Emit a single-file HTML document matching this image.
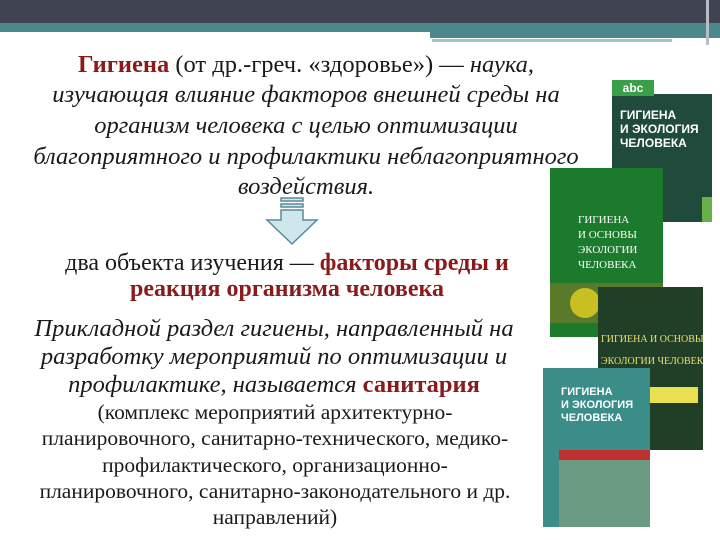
<!DOCTYPE html>
<html><head><meta charset="utf-8"><style>
body{margin:0;width:720px;height:540px;background:#fff;position:relative;overflow:hidden;font-family:"Liberation Serif",serif;color:#1a1a1a}
.a{position:absolute}
.t{position:absolute;text-align:center;font-size:24.5px;line-height:31px;white-space:nowrap}
.r{color:#8b1a1a;font-weight:bold}
i{font-style:italic}
.bk{position:absolute;font-family:"Liberation Sans",sans-serif;font-weight:bold;color:#fff;overflow:hidden}
</style></head><body>
<div class="a" style="left:0;top:0;width:720px;height:23px;background:#404452"></div>
<div class="a" style="left:0;top:23px;width:720px;height:9px;background:#4b878c"></div>
<div class="a" style="left:430px;top:32px;width:290px;height:6px;background:#4b878c"></div>
<div class="a" style="left:432px;top:39px;width:240px;height:3px;background:#a8c0c2"></div>
<div class="a" style="left:706px;top:0;width:3px;height:45px;background:#b8bcc4"></div>
<div class="t" style="left:6px;width:600px;top:49px"><b class="r">Гигиена</b> (от др.-греч. «здоровье») — <i>наука,</i></div>
<div class="t" style="left:6px;width:600px;top:79px"><i>изучающая влияние факторов внешней среды на</i></div>
<div class="t" style="left:6px;width:600px;top:110px"><i>организм человека с целью оптимизации</i></div>
<div class="t" style="left:6px;width:600px;top:141px"><i>благоприятного и профилактики неблагоприятного</i></div>
<div class="t" style="left:6px;width:600px;top:171px"><i>воздействия.</i></div>
<svg class="a" style="left:263px;top:196px" width="58" height="52"><g fill="#cfe6ec" stroke="#5a8a9a" stroke-width="1.5"><rect x="18" y="2" width="22" height="3"/><rect x="18" y="8" width="22" height="3"/><path d="M18 14h22v10h14L29 48 4 24h14z"/></g></svg>
<div class="t" style="left:0;width:574px;top:248px;font-size:24px">два объекта изучения — <b class="r">факторы среды и</b></div>
<div class="t" style="left:0;width:574px;top:274px;font-size:24px"><b class="r">реакция организма человека</b></div>
<div class="t" style="left:0;width:548px;top:315px;line-height:28px"><i>Прикладной раздел гигиены, направленный на</i></div>
<div class="t" style="left:0;width:548px;top:343px;line-height:28px"><i>разработку мероприятий по оптимизации и</i></div>
<div class="t" style="left:0;width:548px;top:371px;line-height:28px"><i>профилактике, называется</i> <b class="r">санитария</b></div>
<div class="t" style="left:0;width:550px;top:399px;font-size:21.5px;line-height:26.3px">(комплекс мероприятий архитектурно-<br>планировочного, санитарно-технического, медико-<br>профилактического, организационно-<br>планировочного, санитарно-законодательного и др.<br>направлений)</div>

<div class="bk" style="left:612px;top:72px;width:100px;height:150px;background:#1f4a3c">
<div class="a" style="left:0;top:0;width:100px;height:22px;background:#fff"></div>
<div class="a" style="left:0;top:8px;width:42px;height:16px;background:#3aa047;font-size:12px;text-align:center;line-height:16px">abc</div>
<div class="a" style="left:8px;top:36px;font-size:12px;line-height:14px">ГИГИЕНА<br>И ЭКОЛОГИЯ<br>ЧЕЛОВЕКА</div>
<div class="a" style="left:90px;top:125px;width:10px;height:25px;background:#6ab04a"></div></div>
<div class="bk" style="left:550px;top:168px;width:113px;height:169px;background:#1c7a2c;font-family:'Liberation Serif',serif;font-weight:normal">
<div class="a" style="left:28px;top:45px;font-size:11px;line-height:15px">ГИГИЕНА<br>И ОСНОВЫ<br>ЭКОЛОГИИ<br>ЧЕЛОВЕКА</div>
<div class="a" style="left:0;top:115px;width:113px;height:40px;background:#5a7a2a"></div>
<div class="a" style="left:20px;top:120px;width:30px;height:30px;border-radius:50%;background:#c8c020"></div></div>
<div class="bk" style="left:598px;top:287px;width:105px;height:163px;background:#213f26;font-family:'Liberation Serif',serif;font-weight:normal;color:#e8e070">
<div class="a" style="left:3px;top:42px;font-size:10px;line-height:22px;white-space:nowrap">ГИГИЕНА И ОСНОВЫ<br>ЭКОЛОГИИ ЧЕЛОВЕКА</div>
<div class="a" style="left:25px;top:100px;width:75px;height:16px;background:#e8e050"></div></div>
<div class="bk" style="left:543px;top:368px;width:107px;height:159px;background:#3b8d8a">
<div class="a" style="left:18px;top:18px;font-size:11px;line-height:13px">ГИГИЕНА<br>И ЭКОЛОГИЯ<br>ЧЕЛОВЕКА</div>
<div class="a" style="left:16px;top:82px;width:91px;height:10px;background:#c03030"></div>
<div class="a" style="left:16px;top:92px;width:91px;height:67px;background:#6a9a80"></div></div>
</body></html>
